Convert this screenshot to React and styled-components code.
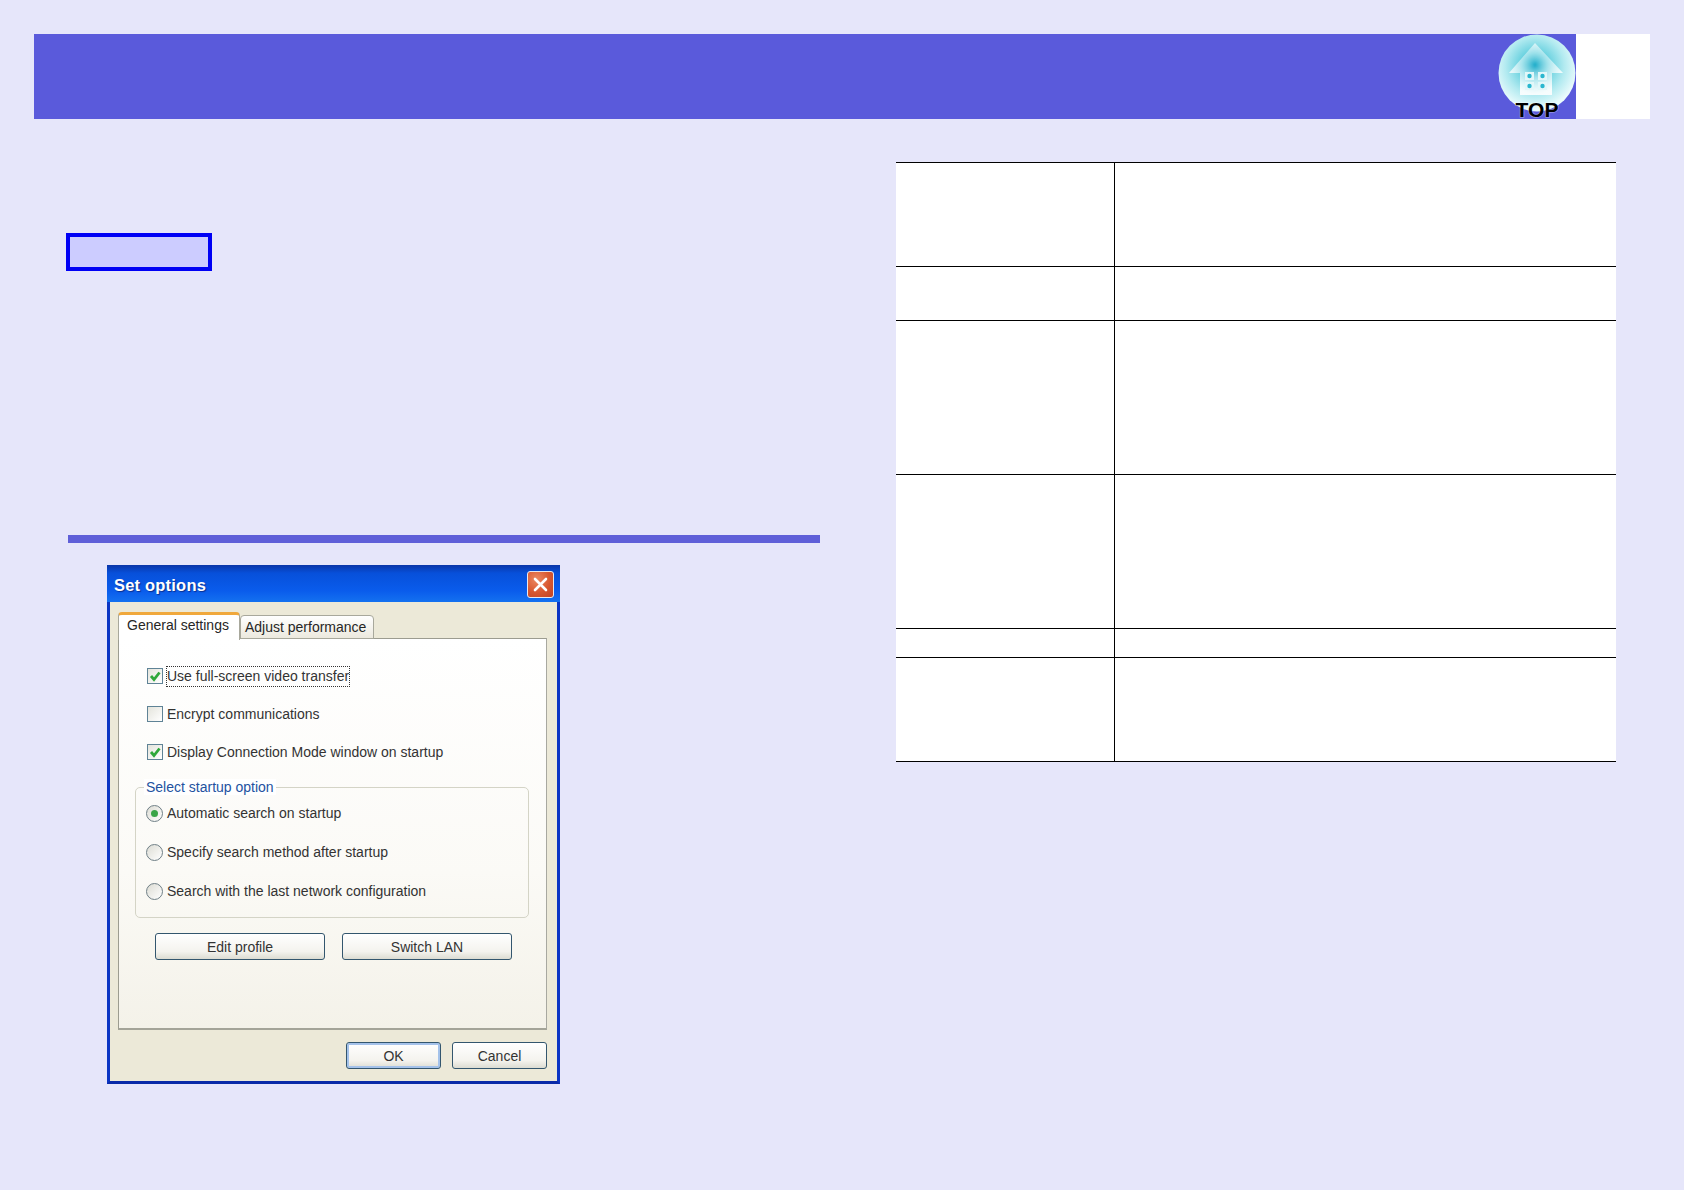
import styled, { createGlobalStyle } from 'styled-components';

const GlobalStyle = createGlobalStyle`
  html, body {
    margin: 0;
    padding: 0;
    background: #e6e6fa;
  }
  body {
    font-family: "Liberation Sans", Arial, sans-serif;
  }
  * {
    box-sizing: border-box;
  }
`;

const Page = styled.div`
  width: 1684px;
  height: 1190px;
  padding-top: 34px;
  overflow: hidden;
`;

const Header = styled.header`
  display: flex;
  height: 85px;
  margin: 0 34px;
`;

const HeaderBar = styled.div`
  flex: 1;
  display: flex;
  justify-content: flex-end;
  align-items: flex-start;
  background: #5a5adb;
`;

const HeaderBlank = styled.div`
  width: 74px;
  background: #ffffff;
`;

const LogoSvg = styled.svg`
  flex-shrink: 0;
  width: 80px;
  height: 90px;
`;

const Columns = styled.div`
  display: flex;
`;

const LeftColumn = styled.section`
  width: 896px;
  padding-left: 66px;
`;

const NoteBox = styled.div`
  width: 146px;
  height: 38px;
  margin-top: 114px;
  background: #ccccff;
  border: 4px solid #0000f5;
`;

const SectionBar = styled.div`
  width: 752px;
  height: 8px;
  margin: 264px 0 22px 2px;
  background: #5f5fd8;
`;

const Dialog = styled.div`
  width: 453px;
  height: 519px;
  margin-left: 41px;
  background: #ece9d8;
  border: 3px solid #0b35c4;
  border-bottom-color: #0a2aa8;
  border-top: 0;
`;

const TitleBar = styled.div`
  display: flex;
  align-items: center;
  justify-content: space-between;
  height: 37px;
  margin: 0 -3px;
  padding: 2px 6px 0 7px;
  background: linear-gradient(180deg, #0a35a8 0%, #0750da 22%, #0a5cec 70%, #1471f0 100%);
`;

const TitleText = styled.span`
  padding-top: 2px;
  color: #ffffff;
  font-size: 16.5px;
  font-weight: bold;
  letter-spacing: 0.2px;
  text-shadow: 1px 1px 1px #0a2f90;
`;

const CloseButton = styled.div`
  display: flex;
  align-items: center;
  justify-content: center;
  width: 27px;
  height: 27px;
  border: 1px solid #e8e8f0;
  border-radius: 3px;
  background: radial-gradient(circle at 35% 30%, #ec8a64 0%, #d8572f 55%, #bf4326 100%);
`;

const DialogBody = styled.div`
  padding: 10px 10px 0 8px;
`;

const TabBar = styled.div`
  display: flex;
  align-items: flex-start;
  height: 26px;
`;

const Tab = styled.div`
  position: relative;
  z-index: ${({ $active }) => ($active ? 1 : 0)};
  width: ${({ $active }) => ($active ? '122px' : '134px')};
  height: ${({ $active }) => ($active ? '28px' : '24px')};
  margin-top: ${({ $active }) => ($active ? '0' : '3px')};
  padding: ${({ $active }) => ($active ? '2px 0 0 8px' : '3px 0 0 4px')};
  font-size: 14px;
  color: #262626;
  white-space: nowrap;
  background: ${({ $active }) => ($active ? '#ffffff' : 'linear-gradient(180deg, #ffffff, #ece9de)')};
  border: 1px solid #a8a89c;
  border-top: ${({ $active }) => ($active ? '3px solid #f0a83c' : '1px solid #a8a89c')};
  border-bottom: ${({ $active }) => ($active ? '0' : '1px solid #a8a89c')};
  border-radius: 4px 4px 0 0;
`;

const TabPanel = styled.div`
  width: 429px;
  height: 392px;
  padding: 27px 0 0 16px;
  background: linear-gradient(180deg, #ffffff 0%, #fbfaf6 60%, #f4f2e9 100%);
  border: 1px solid #9c9c90;
  border-right-color: #a8a8a0;
  border-bottom: 2px solid #a4a498;
`;

const CheckList = styled.div`
  display: flex;
  flex-direction: column;
  gap: 18px;
  margin-left: 12px;
`;

const OptionRow = styled.div`
  display: flex;
  align-items: center;
  gap: 4px;
  height: 20px;
  font-size: 14px;
  color: #333333;
  white-space: nowrap;
`;

const CheckBox = styled.span`
  display: flex;
  align-items: center;
  justify-content: center;
  width: 16px;
  height: 16px;
  background: linear-gradient(135deg, #e4e4dc, #ffffff);
  border: 1px solid #5f8396;
`;

const OptionLabel = styled.span`
  padding: 1px 0;
  line-height: 17px;
  outline: ${({ $focused }) => ($focused ? '1px dotted #333333' : 'none')};
`;

const Group = styled.div`
  position: relative;
  display: flex;
  flex-direction: column;
  gap: 19px;
  width: 394px;
  height: 131px;
  margin-top: 25px;
  padding: 15px 0 0 10px;
  border: 1px solid #d4d4c6;
  border-radius: 5px;
`;

const GroupLegend = styled.span`
  position: absolute;
  top: -9px;
  left: 8px;
  padding: 0 2px;
  font-size: 14px;
  color: #23529f;
  background: #ffffff;
`;

const RadioMark = styled.span`
  display: flex;
  align-items: center;
  justify-content: center;
  width: 17px;
  height: 17px;
  border: 1px solid #6f7f86;
  border-radius: 50%;
  background: linear-gradient(135deg, #dcdcd4, #ffffff);

  &::after {
    content: '';
    display: ${({ $checked }) => ($checked ? 'block' : 'none')};
    width: 7px;
    height: 7px;
    border-radius: 50%;
    background: #3aa548;
  }
`;

const ButtonRow = styled.div`
  display: flex;
  gap: 17px;
  margin: 15px 0 0 20px;
`;

const PushButton = styled.div`
  display: flex;
  align-items: center;
  justify-content: center;
  width: ${({ $width }) => $width}px;
  height: 27px;
  font-size: 14px;
  color: #333333;
  background: linear-gradient(180deg, #ffffff 0%, #f4f3ee 70%, #dcdcd2 100%);
  border: 1px solid #33566e;
  border-radius: 3px;
  box-shadow: ${({ $primary }) => ($primary ? 'inset 0 0 0 2px #a4c2ea' : 'none')};
`;

const DialogFooter = styled.div`
  display: flex;
  justify-content: flex-end;
  gap: 11px;
  margin-top: 12px;
`;

const RightColumn = styled.section`
  padding-top: 43px;
`;

const DataTable = styled.div`
  width: 720px;
  background: #ffffff;
  border-bottom: 1px solid #000000;
`;

const TableRow = styled.div`
  display: grid;
  grid-template-columns: 218px 1fr;
  height: ${({ $height }) => $height}px;
  border-top: 1px solid #000000;
`;

const TableCell = styled.div`
  & + & {
    border-left: 1px solid #000000;
  }
`;

const ROW_HEIGHTS = [104, 54, 154, 154, 29, 104];

const TopLogo = () => (
  <LogoSvg viewBox="0 0 80 90">
    <defs>
      <radialGradient id="logoBall" cx="39" cy="32" r="43" gradientUnits="userSpaceOnUse">
        <stop offset="0" stopColor="#0fa6c6" />
        <stop offset="0.3" stopColor="#5fcedd" />
        <stop offset="0.68" stopColor="#b2eaf0" />
        <stop offset="1" stopColor="#eafbfc" />
      </radialGradient>
      <radialGradient id="logoHouse" cx="39" cy="30" r="30" gradientUnits="userSpaceOnUse">
        <stop offset="0" stopColor="#ffffff" stopOpacity="0.05" />
        <stop offset="0.5" stopColor="#ffffff" stopOpacity="0.5" />
        <stop offset="1" stopColor="#ffffff" stopOpacity="0.9" />
      </radialGradient>
      <filter id="logoSoft" x="-10%" y="-10%" width="120%" height="120%">
        <feGaussianBlur stdDeviation="0.6" />
      </filter>
    </defs>
    <circle cx="41" cy="39" r="38.5" fill="url(#logoBall)" />
    <g filter="url(#logoSoft)">
      <path d="M39 9 L67 39 L56 39 L56 61 L24 61 L24 39 L13 39 Z" fill="url(#logoHouse)" />
      <rect x="29" y="38" width="9" height="8" fill="#e2f7f9" />
      <rect x="42" y="38" width="9" height="8" fill="#e2f7f9" />
      <rect x="29" y="48" width="9" height="8" fill="#e2f7f9" />
      <rect x="42" y="48" width="9" height="8" fill="#e2f7f9" />
      <circle cx="33.5" cy="42" r="2.2" fill="#2ab7cf" />
      <circle cx="46.5" cy="42" r="2.2" fill="#2ab7cf" />
      <circle cx="33.5" cy="52" r="2.2" fill="#2ab7cf" />
      <circle cx="46.5" cy="52" r="2.2" fill="#2ab7cf" />
    </g>
    <text
      x="41"
      y="83"
      textAnchor="middle"
      fontFamily="Liberation Sans, Arial, sans-serif"
      fontWeight="bold"
      fontSize="21"
      fill="#000000"
      stroke="#ffffff"
      strokeOpacity="0.35"
      strokeWidth="1.5"
      paintOrder="stroke"
    >
      TOP
    </text>
  </LogoSvg>
);

const CheckMark = () => (
  <svg width="12" height="12" viewBox="0 0 12 12">
    <path d="M2 6 L5 9.5 L10.5 2.5" fill="none" stroke="#2fa83a" strokeWidth="2.8" />
  </svg>
);

const CloseMark = () => (
  <svg width="15" height="15" viewBox="0 0 15 15">
    <path d="M2 2 L13 13 M13 2 L2 13" stroke="#ffffff" strokeWidth="2.6" strokeLinecap="round" />
  </svg>
);

const App = () => (
  <>
    <GlobalStyle />
    <Page>
      <Header>
        <HeaderBar>
          <TopLogo />
        </HeaderBar>
        <HeaderBlank />
      </Header>
      <Columns>
        <LeftColumn>
          <NoteBox />
          <SectionBar />
          <Dialog>
            <TitleBar>
              <TitleText>Set options</TitleText>
              <CloseButton>
                <CloseMark />
              </CloseButton>
            </TitleBar>
            <DialogBody>
              <TabBar>
                <Tab $active>General settings</Tab>
                <Tab>Adjust performance</Tab>
              </TabBar>
              <TabPanel>
                <CheckList>
                  <OptionRow>
                    <CheckBox><CheckMark /></CheckBox>
                    <OptionLabel $focused>Use full-screen video transfer</OptionLabel>
                  </OptionRow>
                  <OptionRow>
                    <CheckBox />
                    <OptionLabel>Encrypt communications</OptionLabel>
                  </OptionRow>
                  <OptionRow>
                    <CheckBox><CheckMark /></CheckBox>
                    <OptionLabel>Display Connection Mode window on startup</OptionLabel>
                  </OptionRow>
                </CheckList>
                <Group>
                  <GroupLegend>Select startup option</GroupLegend>
                  <OptionRow>
                    <RadioMark $checked />
                    <OptionLabel>Automatic search on startup</OptionLabel>
                  </OptionRow>
                  <OptionRow>
                    <RadioMark />
                    <OptionLabel>Specify search method after startup</OptionLabel>
                  </OptionRow>
                  <OptionRow>
                    <RadioMark />
                    <OptionLabel>Search with the last network configuration</OptionLabel>
                  </OptionRow>
                </Group>
                <ButtonRow>
                  <PushButton $width={170}>Edit profile</PushButton>
                  <PushButton $width={170}>Switch LAN</PushButton>
                </ButtonRow>
              </TabPanel>
              <DialogFooter>
                <PushButton $width={95} $primary>OK</PushButton>
                <PushButton $width={95}>Cancel</PushButton>
              </DialogFooter>
            </DialogBody>
          </Dialog>
        </LeftColumn>
        <RightColumn>
          <DataTable>
            {ROW_HEIGHTS.map((height, i) => (
              <TableRow key={i} $height={height}>
                <TableCell />
                <TableCell />
              </TableRow>
            ))}
          </DataTable>
        </RightColumn>
      </Columns>
    </Page>
  </>
);

export default App;
